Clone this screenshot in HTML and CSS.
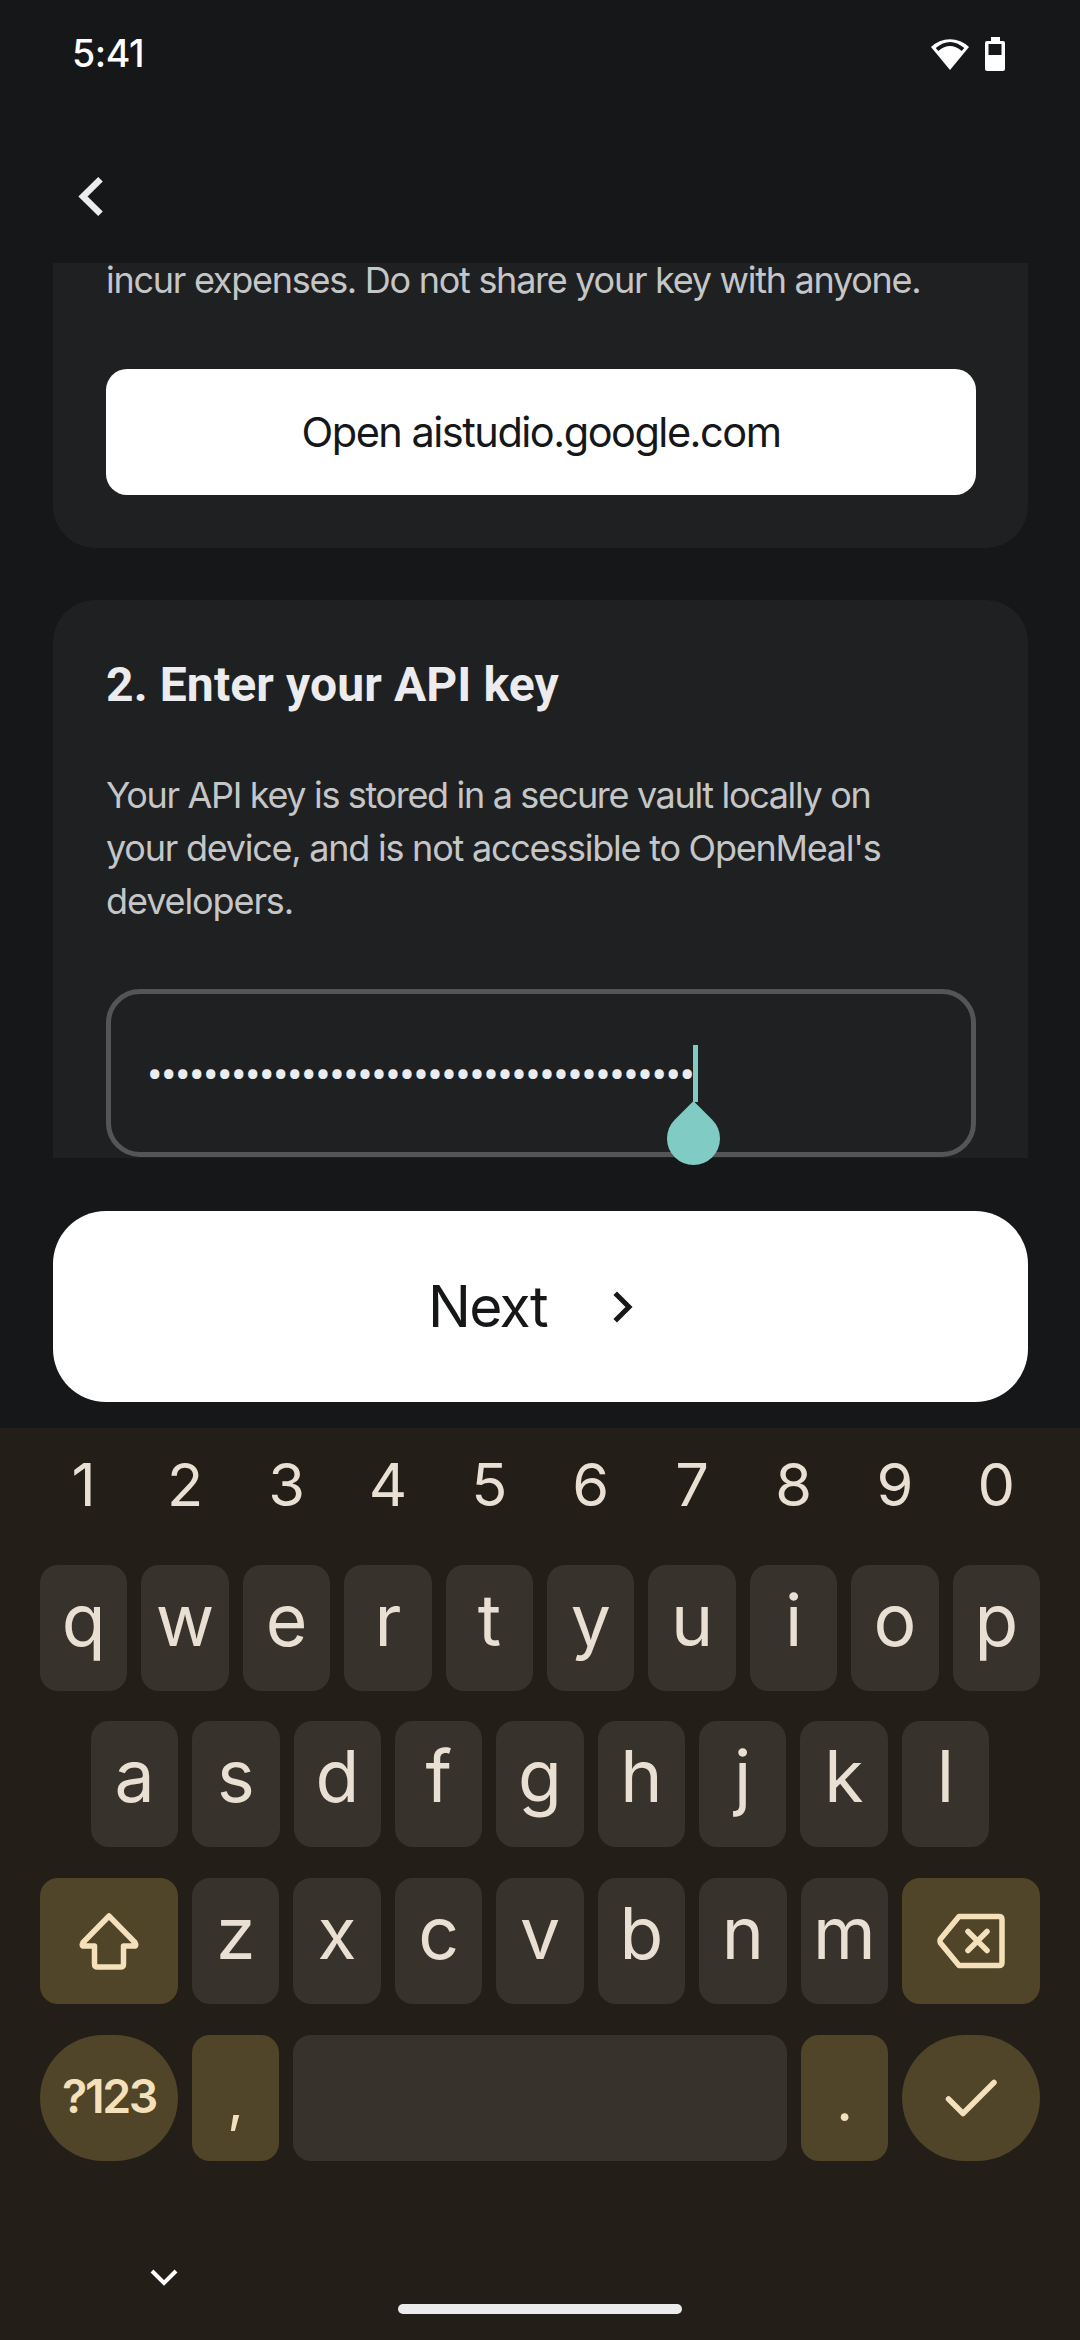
FILE: index.html
```html
<!DOCTYPE html>
<html lang="en">
<head>
<meta charset="utf-8">
<title>API key</title>
<link rel="stylesheet" href="styles.css">
</head>
<body>
<div class="screen">
  <header class="status">
    <span class="clock">5:41</span>
    <svg class="wifi" viewBox="0 0 40 34"><path d="M1 10A27 27 0 0 1 39 10L20 33Z" fill="#fff"/><path d="M7 12.500Q20 1.500 33 12.500" fill="none" stroke="#161719" stroke-width="4"/></svg>
    <svg class="battery" viewBox="0 0 20 34"><path d="M6 0h9v4h3q2 0 2 2v26q0 2-2 2H2q-2 0-2-2V6q0-2 2-2h4Z" fill="#fff"/><path d="M3.500 7h13v11h-13z" fill="#161719"/></svg>
  </header>
  <nav class="topbar">
    <svg class="back" viewBox="0 0 25 39"><path d="M22.500 2.300L5 19.500l17.500 17.200" fill="none" stroke="#ececee" stroke-width="6.500"/></svg>
  </nav>
  <main class="content">
    <section class="card card-first">
      <p class="body warn">incur expenses. Do not share your key with anyone.</p>
      <button class="open">Open aistudio.google.com</button>
    </section>
    <section class="card card-second">
      <h2 class="heading">2. Enter your API key</h2>
      <p class="body info"><span class="l1">Your API key is stored in a secure vault locally on</span><br><span class="l2">your device, and is not accessible to OpenMeal's</span><br><span class="l3">developers.</span></p>
      <div class="field"><span class="dots">•••••••••••••••••••••••••••••••••••••••</span><span class="caret"><span class="handle"></span></span></div>
    </section>
  </main>
  <button class="next"><span class="next-label">Next</span><svg class="next-icon" viewBox="0 0 20 32"><path d="M2.200 2.200L16 16 2.200 29.800" fill="none" stroke="#161719" stroke-width="5"/></svg></button>
  <div class="keyboard">
    <div class="row numbers"><span>1</span><span>2</span><span>3</span><span>4</span><span>5</span><span>6</span><span>7</span><span>8</span><span>9</span><span>0</span></div>
    <div class="row first"><span class="key">q</span><span class="key">w</span><span class="key">e</span><span class="key">r</span><span class="key">t</span><span class="key">y</span><span class="key">u</span><span class="key">i</span><span class="key">o</span><span class="key">p</span></div>
    <div class="row inset"><span class="key">a</span><span class="key">s</span><span class="key">d</span><span class="key">f</span><span class="key">g</span><span class="key">h</span><span class="key">j</span><span class="key">k</span><span class="key">l</span></div>
    <div class="row"><span class="key wide accent"><svg class="shift" viewBox="0 0 60 58"><path d="M30 4L4 30.500Q2 34 5 34H15.500V52Q15.500 55 18.500 55H41.500Q44.500 55 44.500 52V34H55Q58 34 56 30.500Z"/></svg></span><span class="key">z</span><span class="key">x</span><span class="key">c</span><span class="key">v</span><span class="key">b</span><span class="key">n</span><span class="key">m</span><span class="key wide accent"><svg class="erase" viewBox="0 0 68 56"><path d="M22 3.500H62Q65 3.500 65 6.500V49.500Q65 52.500 62 52.500H22L3.500 30Q2.500 28 3.500 26ZM31 18.500L50 37.500M50 18.500L31 37.500"/></svg></span></div>
    <div class="row last"><span class="key wide accent round symbols">?123</span><span class="key accent punct">,</span><span class="key space"></span><span class="key accent punct">.</span><span class="key wide accent round"><svg class="check" viewBox="0 0 52 38"><path d="M3.500 20L18 34.500 49 3.500"/></svg></span></div>
    <footer class="navbar">
      <svg class="hide" viewBox="0 0 28 17"><path d="M2 2l12 12L26 2" fill="none" stroke="#fff" stroke-width="4"/></svg>
      <span class="pill"></span>
    </footer>
  </div>
</div>
</body>
</html>
```
FILE: styles.css
```css
* { box-sizing: border-box; }
body { margin: 0; background: #161719; font-family: Inter, "Liberation Sans", sans-serif; }
p, h2 { margin: 0; }
button { border: 0; padding: 0; font-family: inherit; }
.screen { width: 1080px; height: 2340px; display: flex; flex-direction: column; overflow: hidden; }

.status { height: 110px; padding: 37px 75px 0 72px; display: flex; align-items: flex-start; color: #fff; }
.clock { font-size: 37.5px; font-weight: 500; line-height: 34px; letter-spacing: -0.4px; margin-right: auto; }
.wifi { width: 40px; height: 34px; }
.battery { width: 20px; height: 34px; margin-left: 15px; }
.topbar { height: 153px; padding: 67px 78px 0; }
.back { display: block; width: 25px; height: 39px; }

.content { height: 895px; padding: 0 52px 0 53px; display: flex; flex-direction: column; gap: 52px; }
.card { background: #1f2022; padding: 0 52px 0 53px; }
.card-first { display: flow-root; height: 285px; border-radius: 0 0 42px 42px; }
.card-second { height: 558px; border-radius: 42px 42px 0 0; padding-top: 53px; }
.body { font-size: 36px; line-height: 52.8px; color: #c5c6c7; white-space: nowrap; }
.warn { height: 106px; margin-top: -9px; letter-spacing: -1.27px; }
.open { display: block; width: 870px; height: 126px; margin-top: 9px; border-radius: 21px; background: #fff; color: #161719; font-size: 41.5px; letter-spacing: -1.5px; }
.heading { font-family: Roboto, sans-serif; font-size: 48px; line-height: 64px; letter-spacing: 0.12px; color: #ececee; font-weight: 700; }
.info { margin-top: 52px; }
.l1 { letter-spacing: -1.34px; }
.l2 { letter-spacing: -1.24px; }
.l3 { letter-spacing: -1.1px; }
.field { width: 870px; height: 168px; margin-top: 62px; border: 5px solid #545557; border-radius: 34px; display: flex; align-items: center; padding-left: 36px; }
.dots { font-family: Roboto, sans-serif; font-size: 46px; letter-spacing: -1.51px; color: #ececee; width: 546px; padding-top: 4px; white-space: nowrap; }
.caret { position: relative; width: 5px; height: 57px; background: #80cbc4; }
.handle { position: absolute; z-index: 1; left: -26px; top: 67px; width: 53px; height: 53px; background: #80cbc4; border-radius: 0 50% 50% 50%; transform: rotate(45deg); }

.next { flex: none; display: flex; align-items: center; width: 975px; height: 191px; margin: 53px 0 26px 53px; padding-left: 375px; border-radius: 53px; background: #fff; color: #161719; }
.next-label { font-size: 57px; width: 185px; text-align: left; letter-spacing: -1.7px; }
.next-icon { width: 20px; height: 32px; }

.keyboard { flex: 1; padding: 0 40px; background: #231e18; display: flex; flex-direction: column; color: #e9dfd3; }
.row { display: flex; gap: 14px; height: 126px; margin-bottom: 31px; flex: none; }
.first { margin-bottom: 30px; }
.numbers { height: 114px; margin-bottom: 23px; font-size: 59.5px; line-height: 112px; text-align: center; }
.numbers span { flex: 1; }
.inset { padding: 0 51px; }
.key { flex: 1; display: flex; justify-content: center; align-items: center; border-radius: 18px; background: #38322c; font-size: 71.5px; line-height: 110px; padding-bottom: 17px; }
.wide { flex: none; width: 138px; padding-bottom: 0; }
.accent { background: #504429; color: #f4e1bb; }
.round { border-radius: 63px; }
.symbols { font-size: 46.5px; font-weight: 600; letter-spacing: -2.4px; padding-bottom: 4px; }
.punct { flex: none; width: 87px; font-size: 58px; padding: 3px 0 0; }
.key svg { fill: none; stroke: #f4e1bb; stroke-width: 5.5; stroke-linejoin: round; stroke-linecap: round; }
.shift { width: 60px; height: 58px; }
.erase { width: 68px; height: 56px; }
.check { width: 52px; height: 38px; }
.navbar { flex: 1; padding: 77px 0 0 110px; }
.hide { display: block; width: 28px; height: 17px; }
.pill { display: block; width: 284px; height: 10px; margin: 18px 0 0 248px; border-radius: 5px; background: #ececec; }
```
